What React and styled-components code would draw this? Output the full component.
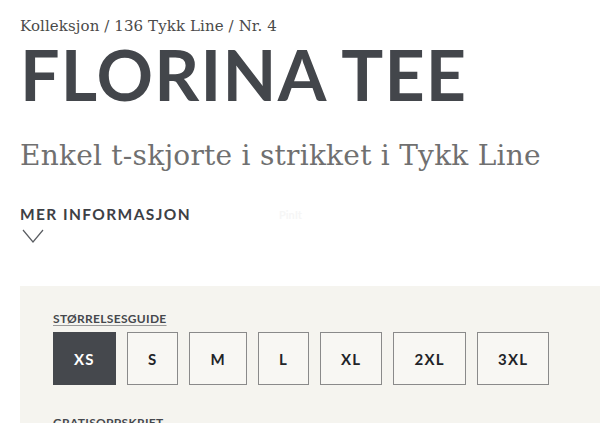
import React from "react";
import styled, { createGlobalStyle } from "styled-components";

const GlobalStyle = createGlobalStyle`
  html, body {
    margin: 0;
    padding: 0;
    background: #ffffff;
    overflow: hidden;
  }
`;

const Page = styled.div`
  width: 600px;
  height: 423px;
  overflow: hidden;
  padding-left: 20px;
  box-sizing: border-box;
`;

const Breadcrumb = styled.div`
  font-family: "DejaVu Serif", "Liberation Serif", serif;
  font-size: 15px;
  line-height: 20px;
  letter-spacing: 0.1px;
  color: #4a4a4a;
  padding-top: 16px;
`;

const Title = styled.h1`
  font-family: Lato, "Open Sans", sans-serif;
  font-weight: 700;
  font-size: 70px;
  line-height: 60px;
  letter-spacing: 1.2px;
  color: #43464b;
  margin: 8px 0 0 0;
`;

const Subtitle = styled.h2`
  font-family: "DejaVu Serif", "Liberation Serif", serif;
  font-weight: 400;
  font-size: 28px;
  line-height: 36px;
  letter-spacing: 0.25px;
  color: #707070;
  margin: 34px 0 0 0;
`;

const MoreRow = styled.div`
  display: flex;
  align-items: center;
  margin-top: 31px;
`;

const MoreLabel = styled.div`
  font-family: Lato, "Open Sans", sans-serif;
  font-weight: 700;
  font-size: 15.5px;
  line-height: 18px;
  letter-spacing: 1.4px;
  color: #3d4045;
`;

const PinIt = styled.span`
  font-family: Lato, sans-serif;
  font-weight: 700;
  font-size: 11px;
  color: #f6f6f6;
  margin-left: 88px;
`;

const Chevron = styled.svg`
  display: block;
  margin: 6px 0 0 2px;
`;

const Panel = styled.div`
  margin-top: 43px;
  background: #f5f4ef;
  padding: 23px 33px 0;
  height: 200px;
`;

const GuideLink = styled.a`
  font-family: Lato, "Open Sans", sans-serif;
  font-weight: 700;
  font-size: 12px;
  line-height: 14px;
  letter-spacing: 0.3px;
  color: #45484d;
  text-decoration: underline;
  text-decoration-color: #9a9a9a;
  text-underline-offset: 2px;
  display: inline-block;
`;

const SizeRow = styled.div`
  display: flex;
  gap: 11px;
  margin-top: 5px;
`;

const SizeButton = styled.button`
  height: 53px;
  padding: 0 20px;
  box-sizing: border-box;
  border: 1px solid ${(p) => (p.selected ? "#45484d" : "#8a8a8a")};
  background: ${(p) => (p.selected ? "#45484d" : "#f8f7f3")};
  color: ${(p) => (p.selected ? "#ffffff" : "#222428")};
  font-family: Lato, "Open Sans", sans-serif;
  font-weight: 700;
  font-size: 15px;
  letter-spacing: 1.3px;
  cursor: pointer;
`;

const FreeLabel = styled.div`
  font-family: Lato, "Open Sans", sans-serif;
  font-weight: 700;
  font-size: 12px;
  line-height: 14px;
  letter-spacing: 0.3px;
  color: #45484d;
  margin-top: 31px;
`;

const sizes = ["XS", "S", "M", "L", "XL", "2XL", "3XL"];

const App = () => {
  return (
    <Page>
      <GlobalStyle />
      <Breadcrumb>Kolleksjon / 136 Tykk Line / Nr. 4</Breadcrumb>
      <Title>FLORINA TEE</Title>
      <Subtitle>Enkel t-skjorte i strikket i Tykk Line</Subtitle>
      <MoreRow>
        <MoreLabel>MER INFORMASJON</MoreLabel>
        <PinIt>PinIt</PinIt>
      </MoreRow>
      <Chevron width="22" height="14" viewBox="0 0 22 14">
        <polyline points="1,1 11,13 21,1" fill="none" stroke="#5a5d62" strokeWidth="1.2" />
      </Chevron>
      <Panel>
        <GuideLink>STØRRELSESGUIDE</GuideLink>
        <SizeRow>
          {sizes.map((s) => (
            <SizeButton key={s} selected={s === "XS"}>
              {s}
            </SizeButton>
          ))}
        </SizeRow>
        <FreeLabel>GRATISOPPSKRIFT</FreeLabel>
      </Panel>
    </Page>
  );
};

export default App;
